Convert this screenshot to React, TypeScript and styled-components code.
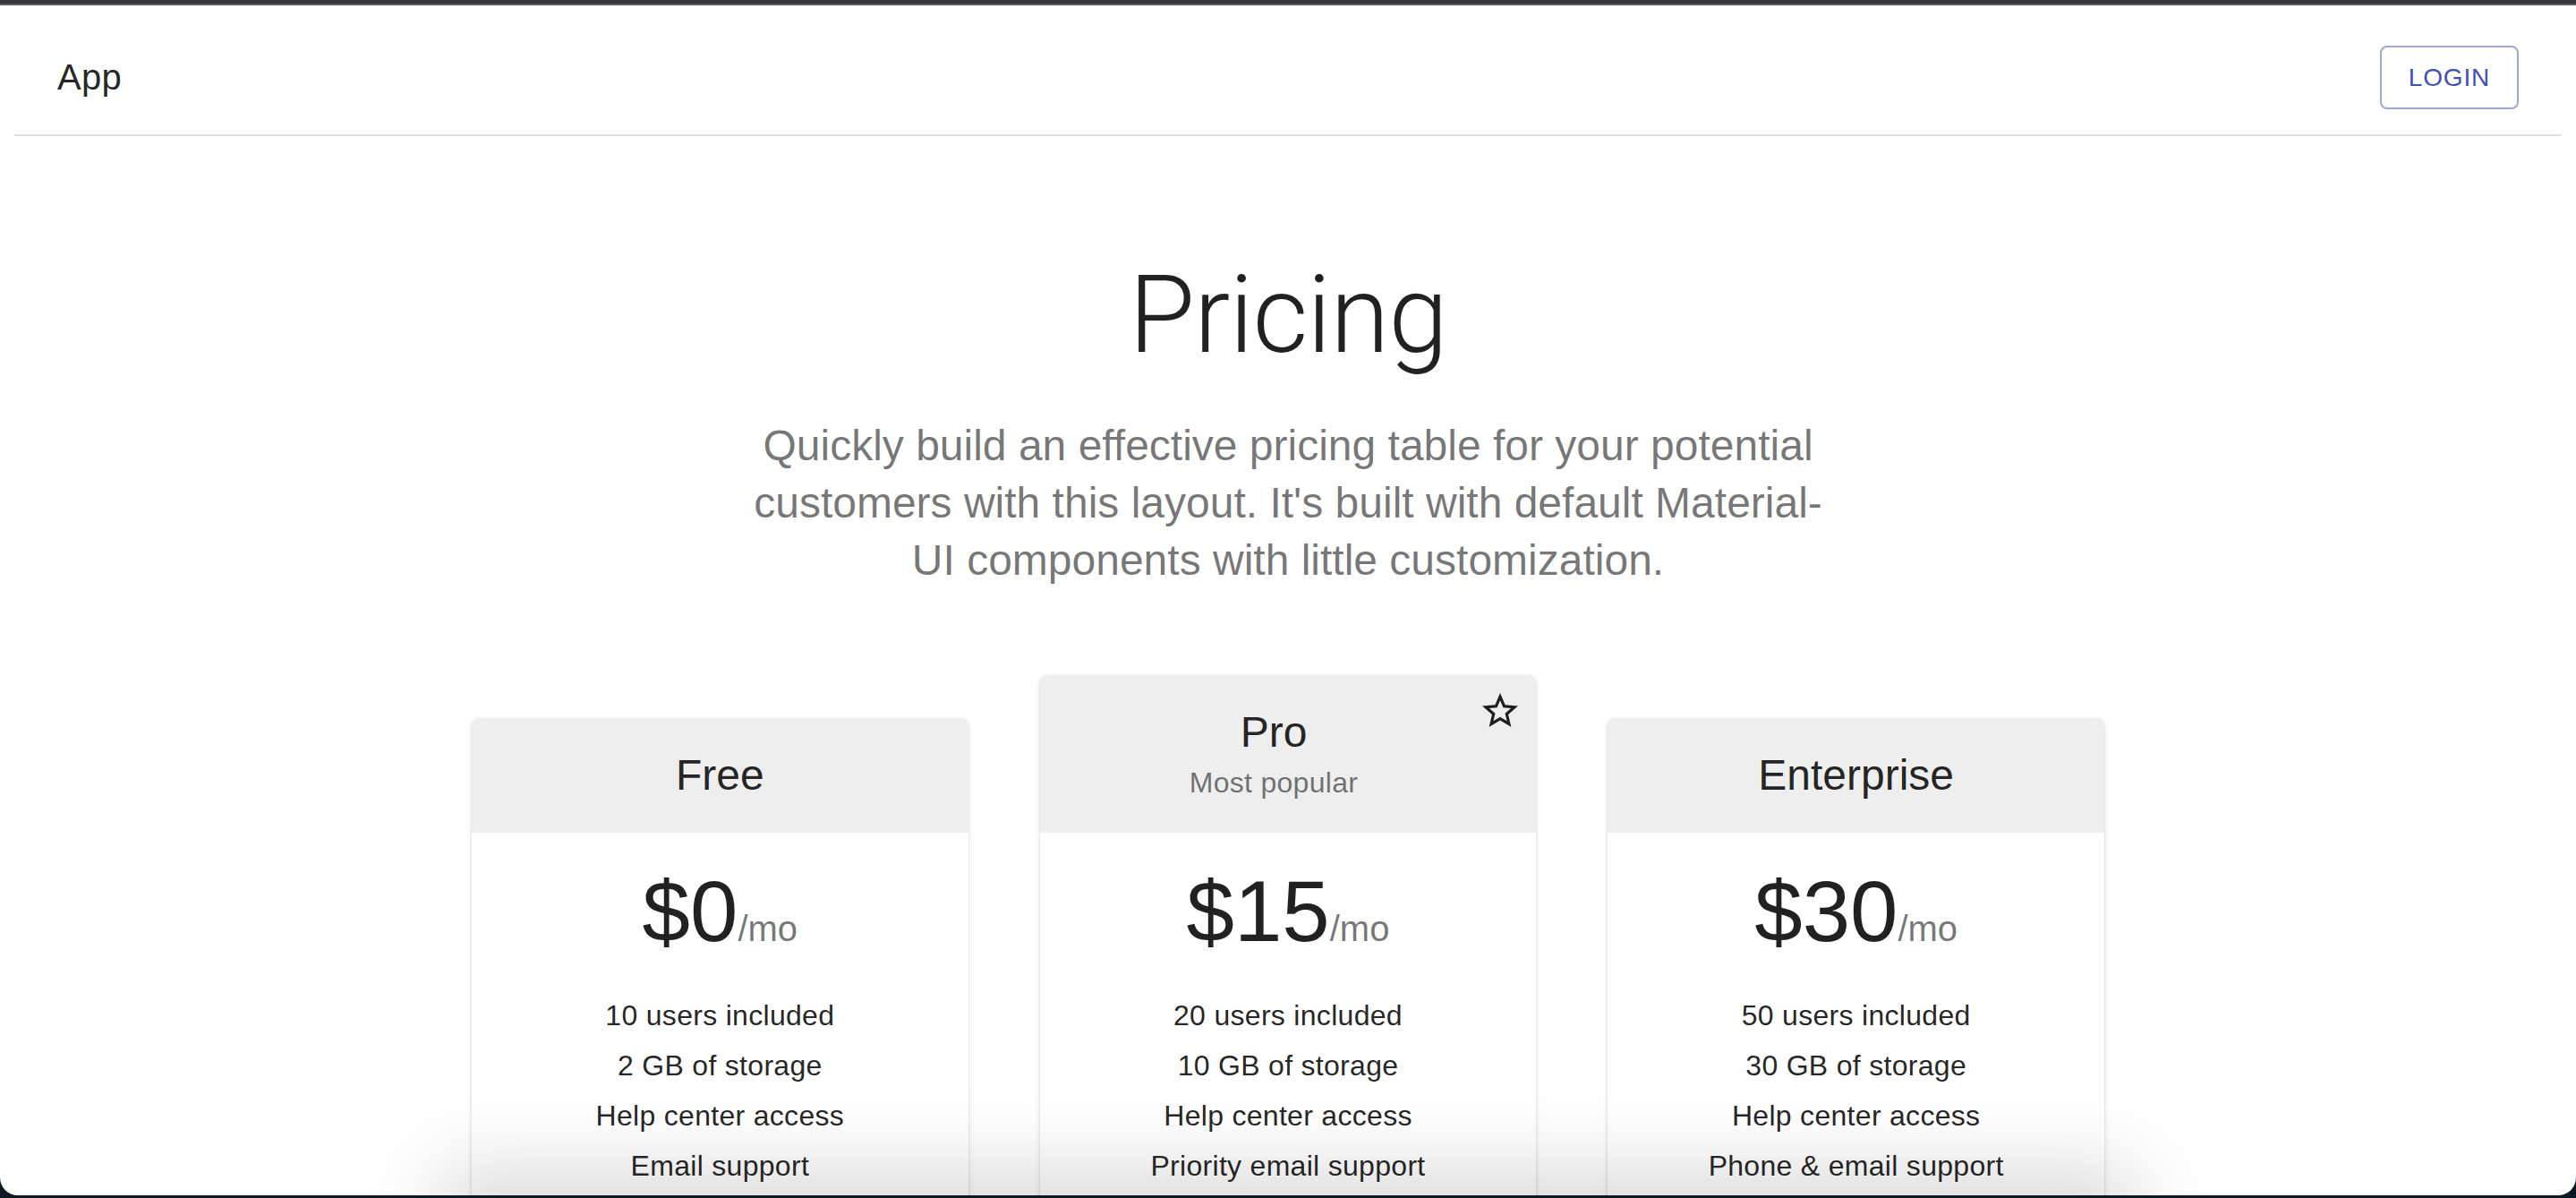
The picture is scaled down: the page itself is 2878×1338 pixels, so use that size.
import React from "react";
import styled, { createGlobalStyle } from "styled-components";

const GlobalStyle = createGlobalStyle`
  * { box-sizing: border-box; }
  html, body {
    margin: 0;
    padding: 0;
    background: #0d1820;
  }
  body {
    font-family: "Liberation Sans", Arial, Helvetica, sans-serif;
    color: rgba(0, 0, 0, 0.87);
    -webkit-font-smoothing: antialiased;
  }
`;

const Screen = styled.div`
  width: 2878px;
  height: 1338px;
  display: flex;
  flex-direction: column;
  overflow: hidden;
  background: #0d1820;
`;

const ChromeEdge = styled.div`
  flex: none;
  height: 6px;
  background: #36373b;
  border-bottom: 2px solid #5a5b5f;
`;

const Viewport = styled.div`
  position: relative;
  flex: 1;
  min-height: 0;
  margin-bottom: 3px;
  padding: 16px;
  background: #ffffff;
  border-radius: 0 0 20px 20px;
  overflow: hidden;
`;

const AppBar = styled.header`
  background: #ffffff;
  border-bottom: 2px solid rgba(0, 0, 0, 0.12);
`;

const Toolbar = styled.div`
  display: flex;
  align-items: center;
  min-height: 128px;
  padding: 0 48px;
`;

const Brand = styled.h6`
  flex: 1;
  margin: 0;
  font-size: 40px;
  line-height: 64px;
  font-weight: 400;
  letter-spacing: 0.0075em;
  color: rgba(0, 0, 0, 0.87);
`;

const LoginButton = styled.button`
  font-family: inherit;
  font-size: 28px;
  font-weight: 400;
  line-height: 1.75;
  letter-spacing: 0.02857em;
  text-transform: uppercase;
  color: #3f51b5;
  background: transparent;
  border: 2px solid rgba(63, 81, 181, 0.5);
  border-radius: 8px;
  padding: 9px 30px;
  cursor: pointer;
`;

const Hero = styled.section`
  width: 1216px;
  margin: 0 auto;
  padding: 128px 0 96px;
  text-align: center;
`;

const Title = styled.h1`
  margin: 0 0 42px;
  font-family: Roboto, "Liberation Sans", Arial, sans-serif;
  font-size: 120px;
  line-height: 144px;
  font-weight: 300;
  letter-spacing: -0.00833em;
  color: rgba(0, 0, 0, 0.87);
`;

const Lead = styled.p`
  margin: 0;
  font-size: 48px;
  line-height: 64px;
  font-weight: 400;
  color: rgba(0, 0, 0, 0.54);
`;

const Plans = styled.main`
  width: 1824px;
  margin: 0 auto;
  display: grid;
  grid-template-columns: repeat(3, 1fr);
  column-gap: 80px;
  align-items: end;
`;

const Card = styled.article`
  background: #ffffff;
  border-radius: 8px;
  overflow: hidden;
  box-shadow: 0 4px 2px -2px rgba(0, 0, 0, 0.2), 0 2px 2px 0 rgba(0, 0, 0, 0.14),
    0 2px 6px 0 rgba(0, 0, 0, 0.12);
`;

const CardHead = styled.div`
  display: flex;
  align-items: center;
  padding: 32px;
  background: #eeeeee;
`;

const HeadText = styled.div`
  flex: 1;
  text-align: center;
`;

const PlanName = styled.div`
  font-size: 48px;
  line-height: 64px;
  font-weight: 400;
  color: rgba(0, 0, 0, 0.87);
`;

const PlanNote = styled.div`
  font-size: 32px;
  line-height: 48px;
  letter-spacing: 0.00938em;
  color: rgba(0, 0, 0, 0.54);
`;

const HeadAction = styled.div`
  flex: none;
  align-self: flex-start;
  margin: -16px -16px 0 0;
`;

const StarIcon = styled.svg`
  display: block;
  width: 48px;
  height: 48px;
  fill: rgba(0, 0, 0, 0.87);
`;

const CardBody = styled.div`
  padding: 32px 32px 96px;
`;

const PriceRow = styled.div`
  display: flex;
  justify-content: center;
  align-items: baseline;
  margin-bottom: 32px;
`;

const Amount = styled.span`
  font-size: 96px;
  line-height: 112px;
  font-weight: 400;
  color: rgba(0, 0, 0, 0.87);
`;

const Per = styled.span`
  font-size: 40px;
  line-height: 64px;
  font-weight: 400;
  color: rgba(0, 0, 0, 0.54);
`;

const Features = styled.ul`
  list-style: none;
  margin: 0;
  padding: 0;
`;

const Feature = styled.li`
  font-size: 32px;
  line-height: 56px;
  letter-spacing: 0.00938em;
  text-align: center;
  color: rgba(0, 0, 0, 0.87);
`;

const BottomGlow = styled.div`
  position: absolute;
  left: 520px;
  right: 520px;
  top: 100%;
  height: 120px;
  pointer-events: none;
  box-shadow: 0 0 90px 30px rgba(0, 0, 0, 0.15);
`;

type Tier = {
  title: string;
  subheader?: string;
  price: string;
  description: string[];
};

const tiers: Tier[] = [
  {
    title: "Free",
    price: "0",
    description: ["10 users included", "2 GB of storage", "Help center access", "Email support"],
  },
  {
    title: "Pro",
    subheader: "Most popular",
    price: "15",
    description: ["20 users included", "10 GB of storage", "Help center access", "Priority email support"],
  },
  {
    title: "Enterprise",
    price: "30",
    description: ["50 users included", "30 GB of storage", "Help center access", "Phone & email support"],
  },
];

export default function App() {
  return (
    <>
      <GlobalStyle />
      <Screen>
        <ChromeEdge />
        <Viewport>
          <AppBar>
            <Toolbar>
              <Brand>App</Brand>
              <LoginButton>Login</LoginButton>
            </Toolbar>
          </AppBar>
          <Hero>
            <Title>Pricing</Title>
            <Lead>
              Quickly build an effective pricing table for your potential customers with this
              layout. It's built with default Material-UI components with little customization.
            </Lead>
          </Hero>
          <Plans>
            {tiers.map((tier) => (
              <Card key={tier.title}>
                <CardHead>
                  <HeadText>
                    <PlanName>{tier.title}</PlanName>
                    {tier.subheader && <PlanNote>{tier.subheader}</PlanNote>}
                  </HeadText>
                  {tier.title === "Pro" && (
                    <HeadAction>
                      <StarIcon viewBox="0 0 24 24">
                        <path d="M22 9.24l-7.19-.62L12 2 9.19 8.63 2 9.24l5.46 4.73L5.82 21 12 17.27 18.18 21l-1.63-7.03L22 9.24zM12 15.4l-3.76 2.27 1-4.28-3.32-2.88 4.38-.38L12 6.1l1.71 4.04 4.38.38-3.32 2.88 1 4.28L12 15.4z" />
                      </StarIcon>
                    </HeadAction>
                  )}
                </CardHead>
                <CardBody>
                  <PriceRow>
                    <Amount>${tier.price}</Amount>
                    <Per>/mo</Per>
                  </PriceRow>
                  <Features>
                    {tier.description.map((line) => (
                      <Feature key={line}>{line}</Feature>
                    ))}
                  </Features>
                </CardBody>
              </Card>
            ))}
          </Plans>
          <BottomGlow />
        </Viewport>
      </Screen>
    </>
  );
}
